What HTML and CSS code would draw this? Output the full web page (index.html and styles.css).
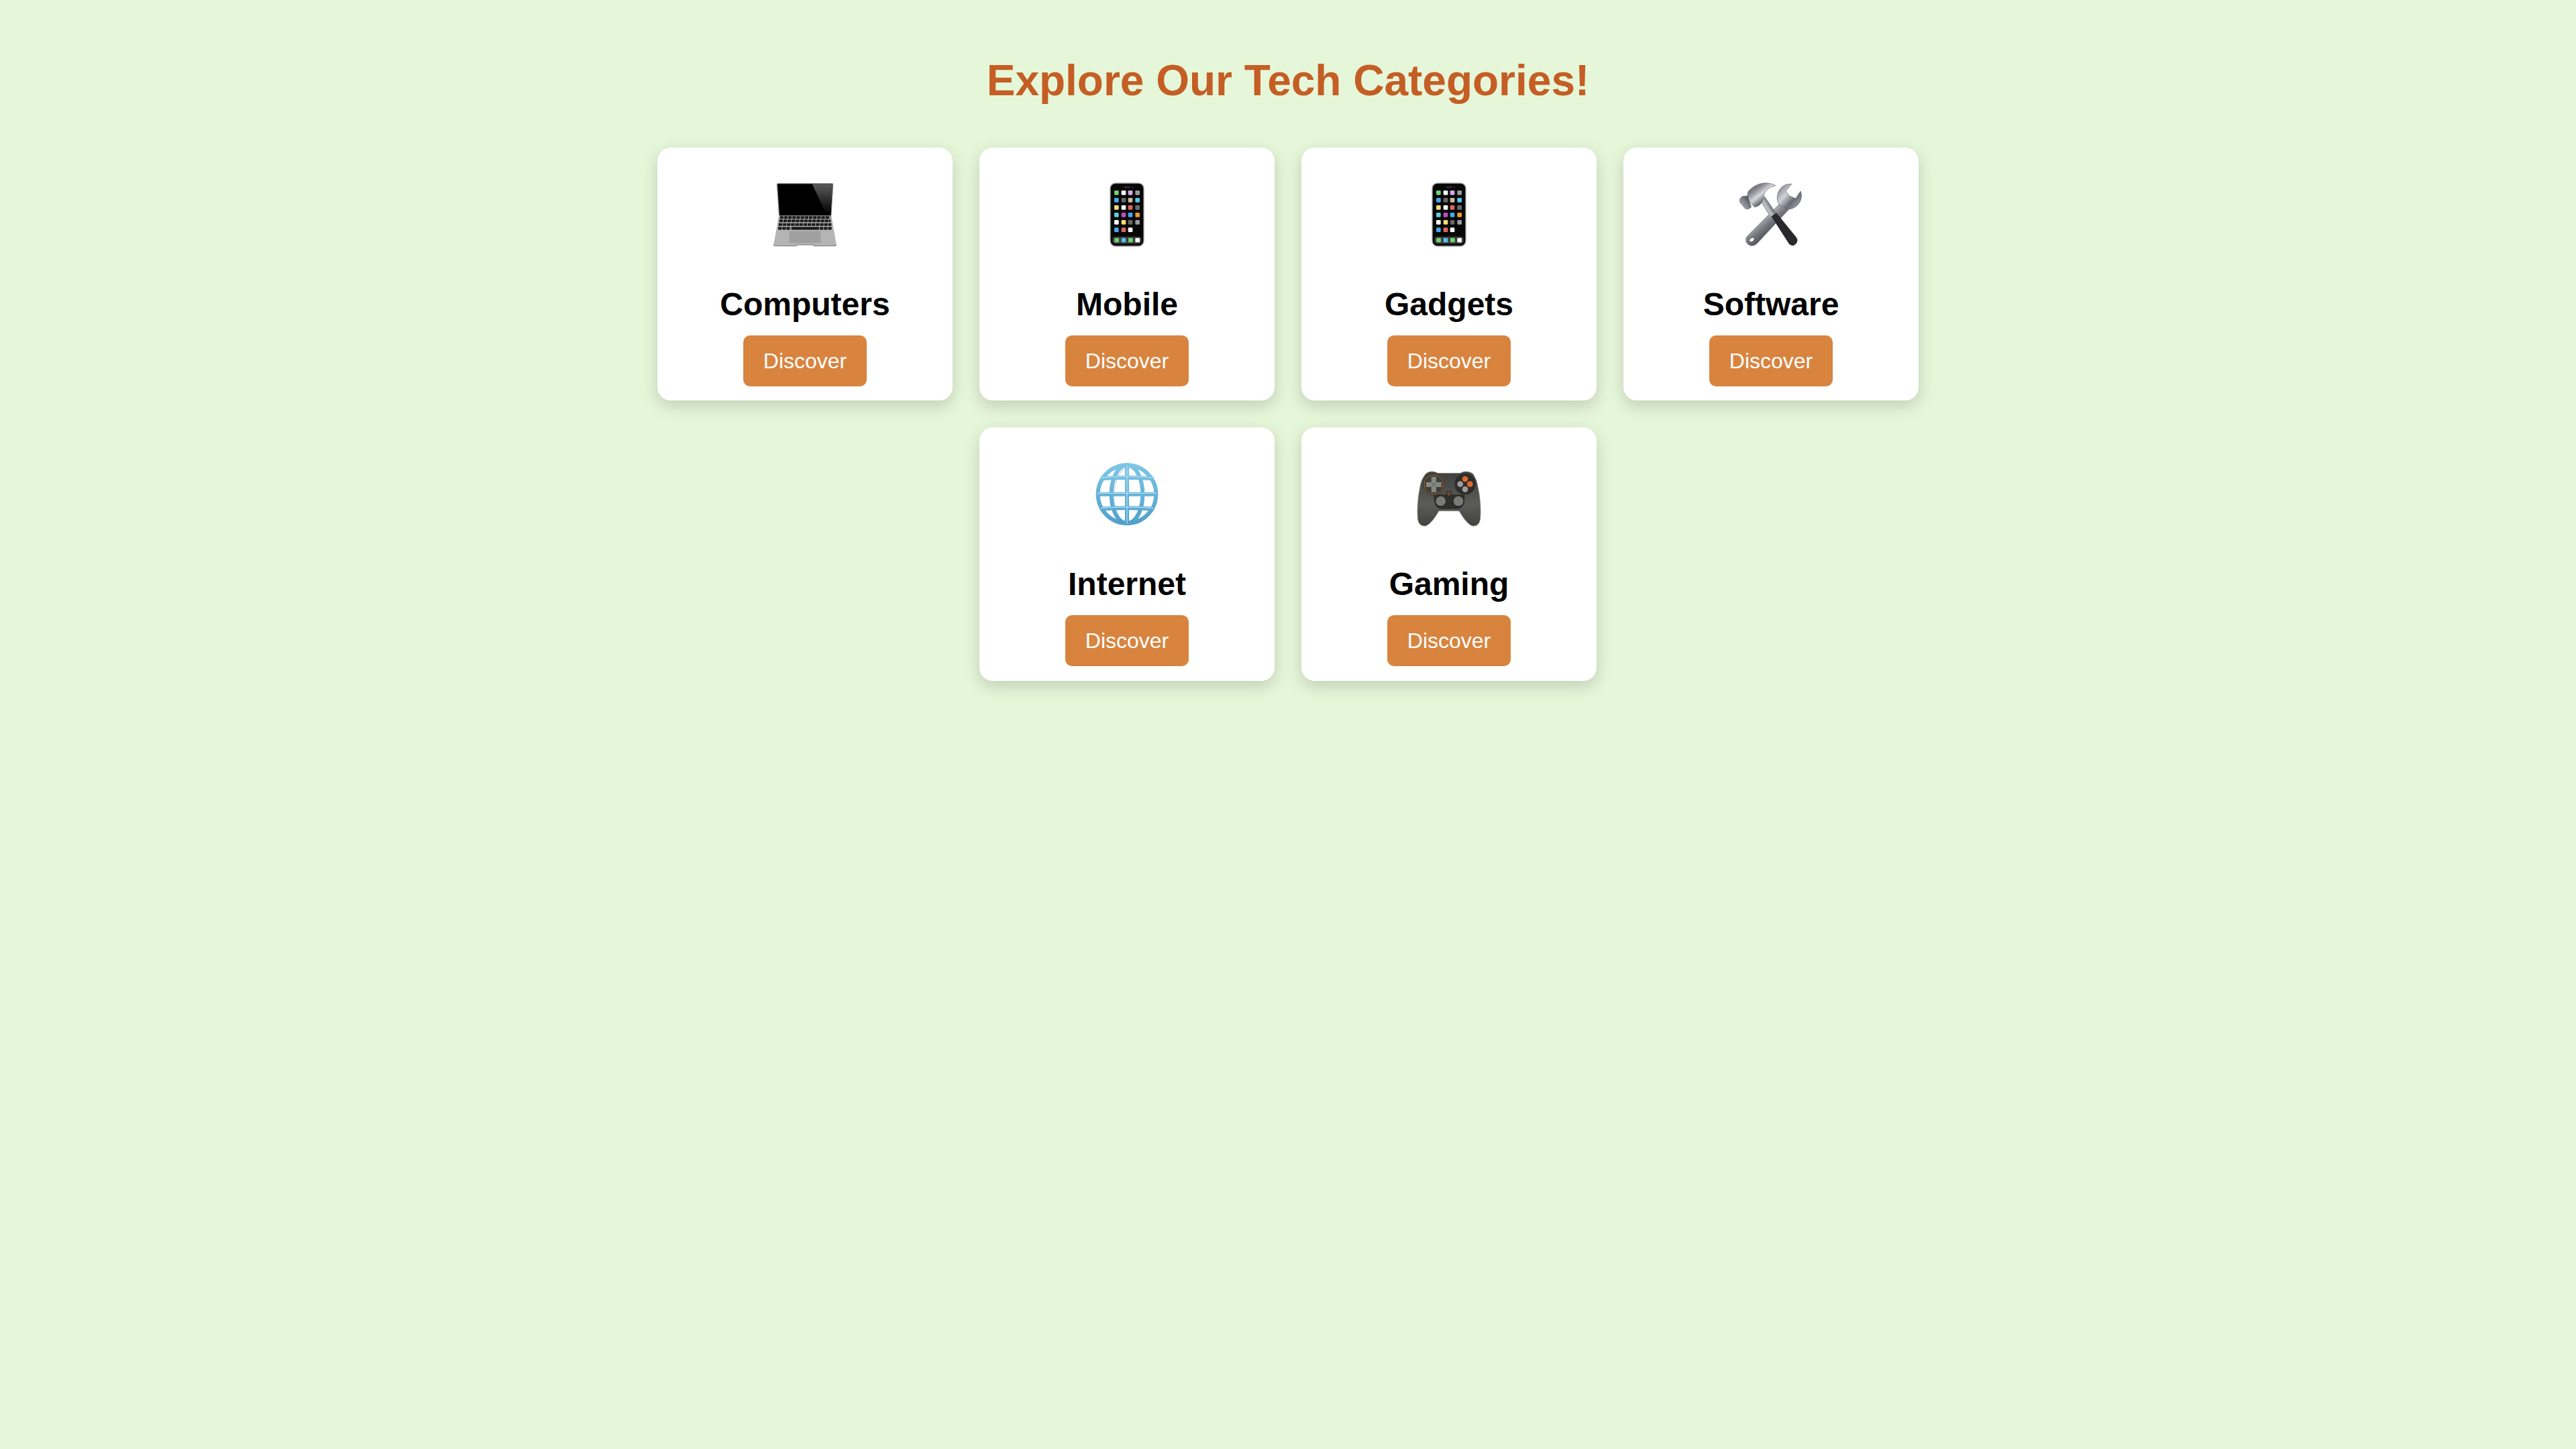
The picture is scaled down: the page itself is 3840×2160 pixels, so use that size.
FILE: index.html

```html
<!DOCTYPE html>
<html lang="en">
<head>
    <meta charset="UTF-8">
    <title>Explore Our Tech Categories</title>
    <link rel="stylesheet" href="styles.css">
</head>
<body>

<svg class="defs" width="0" height="0">
    <defs>
        <linearGradient id="glare" x1="0" y1="0" x2="0" y2="1">
            <stop offset="0" stop-color="#5a5a5a"/>
            <stop offset="1" stop-color="#000"/>
        </linearGradient>
        <linearGradient id="wrenchSteel" gradientUnits="userSpaceOnUse" x1="130" y1="300" x2="190" y2="370">
            <stop offset="0" stop-color="#c8c9ce"/>
            <stop offset="0.5" stop-color="#7b7c83"/>
            <stop offset="1" stop-color="#4a4b51"/>
        </linearGradient>
        <linearGradient id="wrenchHead" gradientUnits="userSpaceOnUse" x1="270" y1="120" x2="370" y2="210">
            <stop offset="0" stop-color="#7f8088"/>
            <stop offset="0.35" stop-color="#d2d3d9"/>
            <stop offset="0.65" stop-color="#6a6b72"/>
            <stop offset="1" stop-color="#a8a9b0"/>
        </linearGradient>
        <linearGradient id="hammerHead" gradientUnits="userSpaceOnUse" x1="140" y1="110" x2="205" y2="195">
            <stop offset="0" stop-color="#4d4e55"/>
            <stop offset="0.35" stop-color="#8f9098"/>
            <stop offset="0.6" stop-color="#d8d9de"/>
            <stop offset="0.85" stop-color="#73747c"/>
            <stop offset="1" stop-color="#3c3d43"/>
        </linearGradient>
        <linearGradient id="hammerFace" gradientUnits="userSpaceOnUse" x1="100" y1="205" x2="150" y2="165">
            <stop offset="0" stop-color="#b4b5bc"/>
            <stop offset="0.5" stop-color="#7f8088"/>
            <stop offset="1" stop-color="#3f4046"/>
        </linearGradient>
        <linearGradient id="hammerNeck" gradientUnits="userSpaceOnUse" x1="195" y1="210" x2="235" y2="185">
            <stop offset="0" stop-color="#5a5b62"/>
            <stop offset="0.5" stop-color="#c4c5ca"/>
            <stop offset="1" stop-color="#5e5f66"/>
        </linearGradient>
        <linearGradient id="globeBlue" gradientUnits="userSpaceOnUse" x1="0" y1="92" x2="0" y2="368">
            <stop offset="0" stop-color="#7fc6e6"/>
            <stop offset="1" stop-color="#4f9fca"/>
        </linearGradient>
        <linearGradient id="padBody" x1="0" y1="0" x2="0" y2="1">
            <stop offset="0" stop-color="#3f403d"/>
            <stop offset="0.6" stop-color="#5b5c58"/>
            <stop offset="1" stop-color="#41423f"/>
        </linearGradient>
        <symbol id="phone" viewBox="0 0 480 480">
            <rect x="165" y="99" width="150" height="282" rx="24" fill="#070707" stroke="#a5a5a5" stroke-width="4"/>
            <rect x="227" y="114" width="28" height="6" rx="3" fill="#333"/>
            <circle cx="264" cy="117" r="3" fill="#333"/>
            <g>
                <rect x="183" y="132" width="20" height="20" rx="4" fill="#6fd36f"/>
                <rect x="215" y="132" width="20" height="20" rx="4" fill="#fff"/>
                <rect x="245" y="132" width="20" height="20" rx="4" fill="#d7a6e8"/>
                <rect x="277" y="132" width="20" height="20" rx="4" fill="#9c9c9c"/>
                <rect x="183" y="165" width="20" height="20" rx="4" fill="#45a8ee"/>
                <rect x="215" y="165" width="20" height="20" rx="4" fill="#666"/>
                <rect x="245" y="165" width="20" height="20" rx="4" fill="#cdbb9a"/>
                <rect x="277" y="165" width="20" height="20" rx="4" fill="#5cc5ee"/>
                <rect x="183" y="198" width="20" height="20" rx="4" fill="#f5dc6e"/>
                <rect x="215" y="198" width="20" height="20" rx="4" fill="#fff"/>
                <rect x="245" y="198" width="20" height="20" rx="4" fill="#d9665c"/>
                <rect x="277" y="198" width="20" height="20" rx="4" fill="#6b6b6b"/>
                <rect x="183" y="231" width="20" height="20" rx="4" fill="#62cfd8"/>
                <rect x="215" y="231" width="20" height="20" rx="4" fill="#c14cc4"/>
                <rect x="245" y="231" width="20" height="20" rx="4" fill="#45a8ee"/>
                <rect x="277" y="231" width="20" height="20" rx="4" fill="#ef9a2e"/>
                <rect x="183" y="264" width="20" height="20" rx="4" fill="#fff"/>
                <rect x="215" y="264" width="20" height="20" rx="4" fill="#f5dc6e"/>
                <rect x="245" y="264" width="20" height="20" rx="4" fill="#666"/>
                <rect x="277" y="264" width="20" height="20" rx="4" fill="#9c9c9c"/>
                <rect x="183" y="298" width="20" height="20" rx="4" fill="#45a8ee"/>
                <rect x="215" y="298" width="20" height="20" rx="4" fill="#d9665c"/>
                <rect x="245" y="298" width="20" height="20" rx="4" fill="#fff"/>
            </g>
            <rect x="175" y="338" width="130" height="32" rx="12" fill="#3c3c3c"/>
            <rect x="184" y="344" width="20" height="20" rx="4" fill="#6fd36f"/>
            <rect x="215" y="344" width="20" height="20" rx="4" fill="#55bff0"/>
            <rect x="246" y="344" width="20" height="20" rx="4" fill="#6fd36f"/>
            <rect x="277" y="344" width="20" height="20" rx="4" fill="#fff"/>
        </symbol>
    </defs>
</svg>

<h1 class="page-title">Explore Our Tech Categories!</h1>

<div class="categories">
    <div class="card">
        <svg class="card-icon" viewBox="0 0 480 480">
            <path d="M120 99H360Q367 99 367 106L358 246H123L113 106Q113 99 120 99Z" fill="#8c8c8c"/>
            <path d="M117 103H363L355 244H126Z" fill="#000"/>
            <path d="M272 103H363L355 240H336Z" fill="url(#glare)"/>
            <path d="M123 245H358L380 372Q380 380 372 380H282L272 375H208L200 380H108Q100 380 100 372Z" fill="#b4b4b4"/>
            <path d="M100 372Q100 380 108 380H200L208 375H272L282 380H372Q380 380 380 372" fill="none" stroke="#777" stroke-width="3"/>
            <line x1="128" y1="253" x2="352" y2="253" stroke="#1b1b1b" stroke-width="12" stroke-dasharray="16 2.5"/>
            <line x1="125" y1="268" x2="355" y2="268" stroke="#1b1b1b" stroke-width="12" stroke-dasharray="16 2.5"/>
            <line x1="122" y1="284" x2="358" y2="284" stroke="#1b1b1b" stroke-width="12" stroke-dasharray="16 2.5"/>
            <line x1="120" y1="301" x2="176" y2="301" stroke="#1b1b1b" stroke-width="13" stroke-dasharray="16 2.5"/>
            <line x1="179" y1="301" x2="303" y2="301" stroke="#1b1b1b" stroke-width="13"/>
            <line x1="306" y1="301" x2="360" y2="301" stroke="#1b1b1b" stroke-width="13" stroke-dasharray="16 2.5"/>
            <rect x="170" y="314" width="140" height="53" fill="#a0a0a0"/>
        </svg>
        <h3 class="card-title">Computers</h3>
        <button class="discover-btn">Discover</button>
    </div>

    <div class="card">
        <svg class="card-icon" viewBox="0 0 480 480"><use href="#phone"/></svg>
        <h3 class="card-title">Mobile</h3>
        <button class="discover-btn">Discover</button>
    </div>

    <div class="card">
        <svg class="card-icon" viewBox="0 0 480 480"><use href="#phone"/></svg>
        <h3 class="card-title">Gadgets</h3>
        <button class="discover-btn">Discover</button>
    </div>

    <div class="card">
        <svg class="card-icon" viewBox="0 0 480 480">
            <path d="M290 180L134 336C122 350 128 372 148 378C160 380 170 376 178 368L330 205Z" fill="url(#wrenchSteel)" stroke="#5b5c62" stroke-width="2"/>
            <path d="M332 103C300 100 272 122 268 158C266 176 272 190 282 200L312 216C340 216 368 200 376 164Q378 148 372 135L350 168L320 155L306 134Z" fill="url(#wrenchHead)" stroke="#5b5c62" stroke-width="2"/>
            <ellipse cx="154" cy="352" rx="13" ry="9" transform="rotate(-30 154 352)" fill="#fff" stroke="#44454b" stroke-width="3"/>
            <path d="M190 175L212 158L262 232L236 250Z" fill="url(#hammerNeck)"/>
            <path d="M242 248L264 232L354 342Q364 358 350 372Q334 386 320 370Z" fill="#2a2a2c"/>
            <path d="M261 110C225 90 175 94 137 138L133 166L166 206C188 204 206 184 207 160C208 138 228 116 261 110Z" fill="url(#hammerHead)" stroke="#66676d" stroke-width="2"/>
            <path d="M135 156L112 158Q94 170 102 186L124 212Q138 220 152 206Z" fill="url(#hammerFace)" stroke="#66676d" stroke-width="2"/>
        </svg>
        <h3 class="card-title">Software</h3>
        <button class="discover-btn">Discover</button>
    </div>

    <div class="card">
        <svg class="card-icon" viewBox="0 0 480 480">
            <g transform="translate(0 9)" fill="none">
                <ellipse cx="247" cy="237" rx="66" ry="126" stroke="#dfe8f0" stroke-width="10"/>
                <g stroke="url(#globeBlue)" stroke-width="18">
                    <circle cx="240" cy="230" r="130"/>
                    <ellipse cx="240" cy="230" rx="70" ry="130"/>
                    <line x1="240" y1="98" x2="240" y2="362"/>
                    <path d="M122 160Q240 152 358 160"/>
                    <line x1="102" y1="230" x2="378" y2="230"/>
                    <path d="M122 296Q240 288 358 296"/>
                </g>
                <g stroke="#a9def2" stroke-width="4">
                    <line x1="240" y1="98" x2="240" y2="362"/>
                    <path d="M122 156Q240 148 358 156"/>
                    <line x1="108" y1="226" x2="372" y2="226"/>
                    <path d="M122 292Q240 284 358 292"/>
                </g>
            </g>
        </svg>
        <h3 class="card-title">Internet</h3>
        <button class="discover-btn">Discover</button>
    </div>

    <div class="card">
        <svg class="card-icon" viewBox="0 0 480 480">
            <g transform="translate(0 9)">
                <path d="M135 140Q150 125 175 130L190 136H290L305 130Q330 125 348 140Q365 165 370 200Q385 270 380 340Q375 376 345 372Q320 365 285 305H195Q160 365 135 372Q105 376 100 340Q95 270 110 200Q115 165 135 140Z" fill="url(#padBody)" stroke="#8b8c88" stroke-width="2"/>
                <path d="M172 232H310Q312 290 282 296H202Q170 290 172 232Z" fill="#2f302e"/>
                <circle cx="172" cy="187" r="48" fill="#393a37"/>
                <circle cx="172" cy="187" r="43" fill="#3d3e3b" stroke="#b5602a" stroke-width="3"/>
                <path d="M161 153H183V176H206V198H183V221H161V198H138V176H161Z" fill="#858781"/>
                <path d="M161 176L183 198M183 176L161 198" stroke="#4a4b47" stroke-width="2"/>
                <circle cx="312" cy="185" r="47" fill="#2d2e2c"/>
                <circle cx="312" cy="162" r="13" fill="#e0692a"/>
                <circle cx="334" cy="185" r="13" fill="#e0692a"/>
                <circle cx="290" cy="185" r="13" fill="#9c9d99"/>
                <circle cx="312" cy="208" r="13" fill="#9c9d99"/>
                <circle cx="240" cy="228" r="13" fill="#2b2c2a"/>
                <circle cx="240" cy="228" r="6" fill="none" stroke="#d9692c" stroke-width="3"/>
                <circle cx="203" cy="262" r="27" fill="#2a2b29"/>
                <circle cx="203" cy="261" r="22" fill="#7a7b78"/>
                <circle cx="282" cy="262" r="27" fill="#2a2b29"/>
                <circle cx="282" cy="261" r="22" fill="#7a7b78"/>
            </g>
        </svg>
        <h3 class="card-title">Gaming</h3>
        <button class="discover-btn">Discover</button>
    </div>
</div>

</body>
</html>
```

FILE: styles.css

```css
body {
    font-family: "Liberation Sans", Arial, sans-serif;
    margin: 0;
    padding: 40px;
    background-color: #e6f6d9;
    text-align: center;
}
.defs {
    position: absolute;
}
.page-title {
    color: #c45e24;
    font-size: 64px;
    margin: 43px 0 63px;
}
.categories {
    display: flex;
    flex-wrap: wrap;
    justify-content: center;
    gap: 40px;
    max-width: 1920px;
    margin: 0 auto;
}
.card {
    width: 440px;
    box-sizing: border-box;
    padding: 20px 20px 21.33px;
    background-color: white;
    border-radius: 20px;
    box-shadow: 0 8px 24px rgba(0,0,0,0.16);
}
.card-icon {
    display: block;
    width: 160px;
    height: 160px;
    margin: 0 auto;
}
.card-title {
    font-size: 48px;
    margin: 26px 0 19px;
    color: #000;
}
.discover-btn {
    font-family: "Liberation Sans", Arial, sans-serif;
    font-size: 32px;
    color: white;
    background-color: #d8843f;
    border: none;
    border-radius: 10px;
    padding: 20px 30px;
    height: 76px;
    cursor: pointer;
}
```
